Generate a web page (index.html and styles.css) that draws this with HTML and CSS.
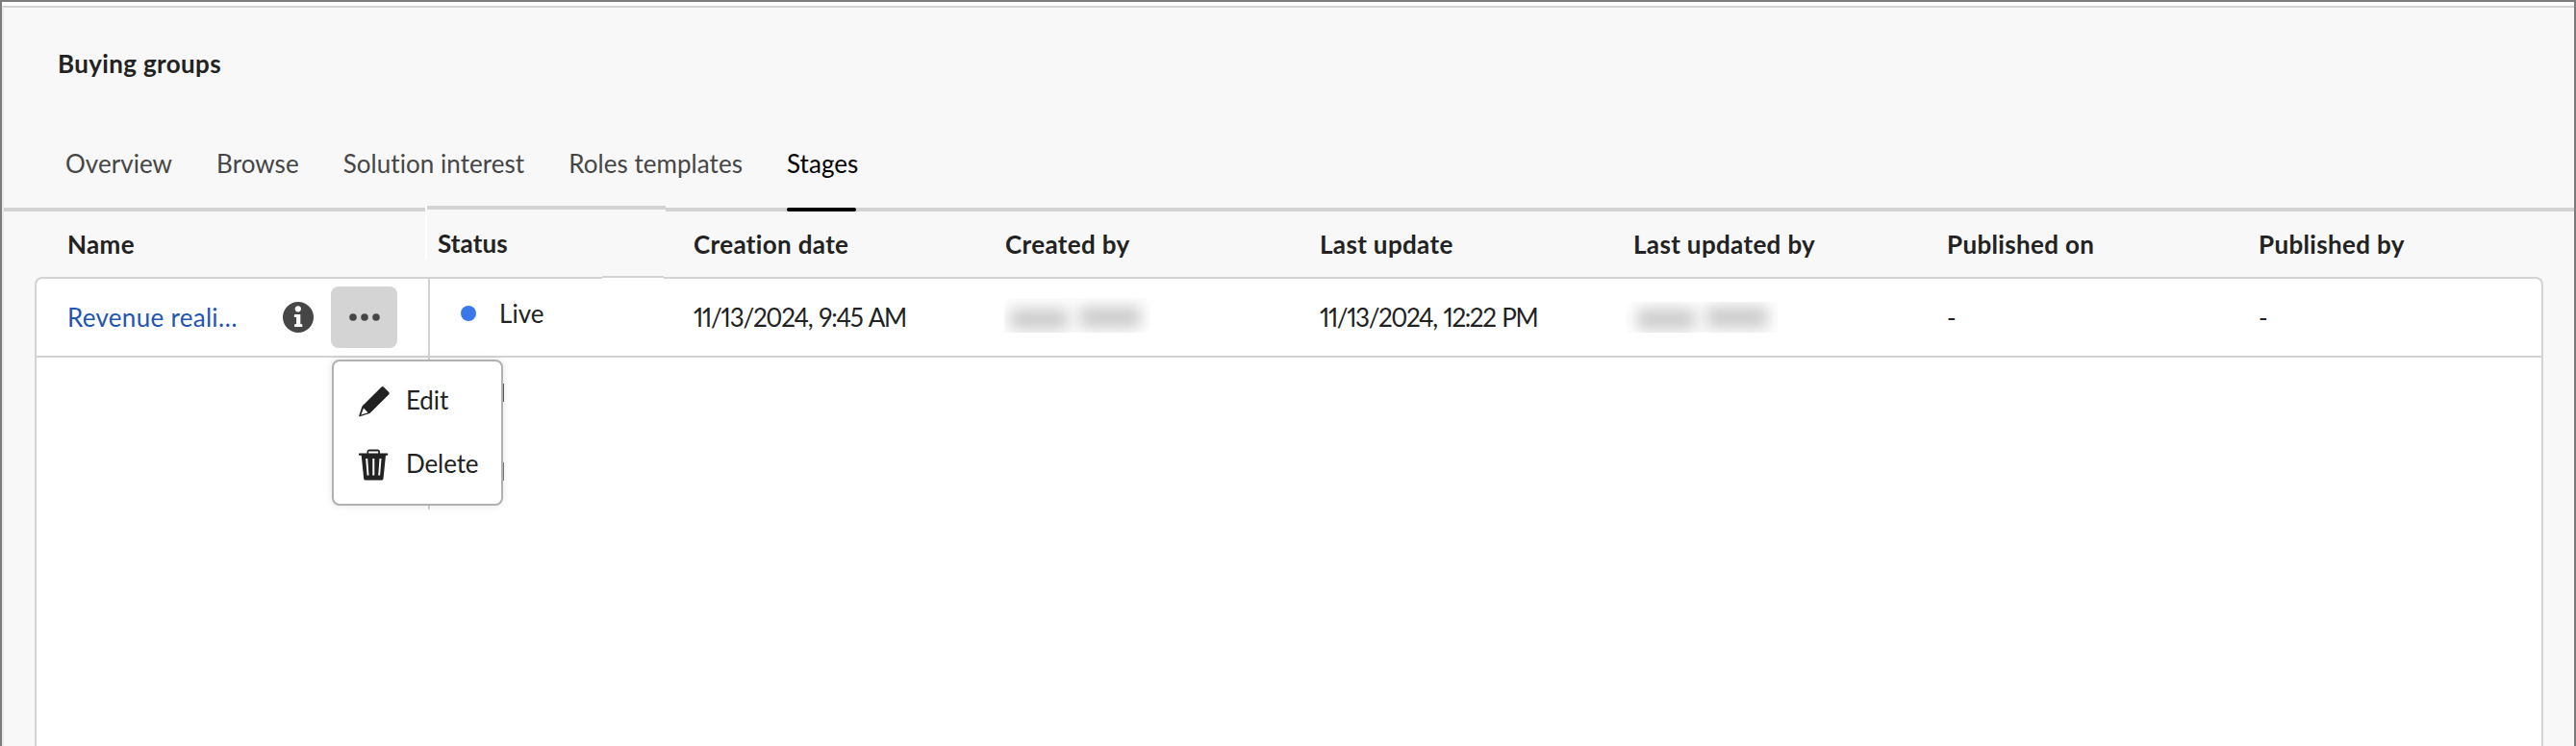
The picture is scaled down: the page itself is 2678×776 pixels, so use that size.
FILE: index.html
```html
<!DOCTYPE html>
<html lang="en">
<head>
<meta charset="utf-8">
<title>Buying groups</title>
<link rel="stylesheet" href="styles.css">
</head>
<body>
<div class="frame">
  <div class="app">
    <h1 class="title">Buying groups</h1>
    <nav class="tabs">
      <a class="tab">Overview</a>
      <a class="tab">Browse</a>
      <a class="tab">Solution interest</a>
      <a class="tab">Roles templates</a>
      <a class="tab active">Stages</a>
    </nav>
    <div class="table">
      <div class="grid head">
        <div class="cell name">Name</div>
        <div class="cell status">Status</div>
        <div class="cell">Creation date</div>
        <div class="cell">Created by</div>
        <div class="cell wide">Last update</div>
        <div class="cell wide">Last updated by</div>
        <div class="cell wide">Published on</div>
        <div class="cell wide">Published by</div>
      </div>
      <div class="body">
        <div class="grid row">
          <div class="cell name">
            <a class="link">Revenue reali…</a>
            <svg class="info" width="32" height="32" viewBox="0 0 32 32"><circle cx="16" cy="16" r="16" fill="#464646"/><circle cx="15.8" cy="7.3" r="3.1" fill="#fff"/><path d="M12.8 13h5.500v10h1a1 1 0 0 1 1 1v2h-8.200v-2a1 1 0 0 1 1-1h1v-7h-1.300a1 1 0 0 1-1-1v-1a1 1 0 0 1 1-1z" fill="#fff"/></svg>
            <button class="more"><svg width="32" height="8" viewBox="0 0 32 8" fill="#464646"><circle cx="4" cy="4" r="3.8"/><circle cx="16" cy="4" r="3.8"/><circle cx="28" cy="4" r="3.8"/></svg></button>
          </div>
          <div class="cell status"><span class="dot"></span>Live</div>
          <div class="cell date">11/13/2024, 9:45 AM</div>
          <div class="cell person"><span class="redacted"><i class="w1"></i><i class="w2"></i></span></div>
          <div class="cell wide date late">11/13/2024, 12:22 PM</div>
          <div class="cell wide person second"><span class="redacted"><i class="w1"></i><i class="w2"></i></span></div>
          <div class="cell wide">-</div>
          <div class="cell wide">-</div>
        </div>
        <div class="divider"></div>
        <div class="menu">
          <div class="item"><svg width="34" height="34" viewBox="0 0 34 34"><path fill="#222" fill-rule="evenodd" d="M23.600 1.600a1.600 1.600 0 0 1 2.200 0l5.500 5.500a1.600 1.600 0 0 1 0 2.200L11.400 28.900 1 32.300a.6.6 0 0 1-.8-.8L3.500 21.500zM5 23.600L2.300 30.600l7.200-2.300z"/></svg>Edit</div>
          <div class="item"><svg width="34" height="34" viewBox="0 0 34 34"><path fill="#222" fill-rule="evenodd" d="M8.500 4.500V3a2.500 2.500 0 0 1 2.500-2.500h8.500A2.500 2.500 0 0 1 22 3v1.500h7.500a.8.8 0 0 1 .8.800v.600a.8.8 0 0 1-.8.800H28L25.500 31a1.800 1.800 0 0 1-1.800 1.500H7A1.800 1.800 0 0 1 5.200 31L2.700 6.700H.7a.8.8 0 0 1-.8-.800v-.600a.8.8 0 0 1 .8-.800zM10.200 4.500h10V2.500h-10zM7.200 10l1.400 17.500h1.900L9.200 10zM14.300 10v17.500h2V10zM21.500 10l-1.300 17.500h1.900L23.500 10z"/></svg>Delete</div>
        </div>
      </div>
    </div>
  </div>
</div>
</body>
</html>
```
FILE: styles.css
```css
* { box-sizing: border-box; }
body {
  margin: 0;
  background: #fff;
  color: #222;
  font: 400 26px/36px Lato, "Open Sans", sans-serif;
  letter-spacing: .05px;
}
.frame {
  height: 776px;
  padding-top: 4px;
  border: 2px solid #7d7b7b;
  border-bottom: 0;
  overflow: hidden;
}
.app {
  display: flex;
  flex-direction: column;
  height: 770px;
  border-top: 2px solid #d3d3d3;
  border-left: 2px solid #e9e9e9;
  background: #f8f8f8;
}
.title {
  margin: 40px 0 0 56px;
  font-size: 26px;
  font-weight: 700;
  letter-spacing: .35px;
}
.tabs {
  display: flex;
  gap: 46px;
  height: 136px;
  padding: 68px 0 0 64px;
  border-bottom: 4px solid #d3d3d3;
}
.tab { position: relative; color: #464646; white-space: nowrap; }
.tab.active { color: #000; }
.tab.active::after {
  content: "";
  position: absolute;
  left: 0;
  top: 64px;
  width: 72px;
  height: 4px;
  border-radius: 2px;
  background: #000;
}
.table {
  display: flex;
  flex: 1;
  flex-direction: column;
  width: 2608px;
  margin-left: 32px;
}
.grid {
  display: grid;
  grid-template-columns: 410px 256px 324px 326px 326px 326px 324px 1fr;
}
.head {
  height: 68px;
  padding-top: 16px;
  font-weight: 700;
  letter-spacing: .35px;
}
.cell { padding-left: 19px; white-space: nowrap; }
.cell.wide { padding-left: 20px; }
.cell.name { padding-left: 34px; }
.head .status { position: relative; z-index: 1; top: -1px; padding-left: 9px; letter-spacing: .1px; }
.head .status::before {
  content: "";
  position: absolute;
  left: -4px;
  top: -21px;
  width: 248px;
  height: 56px;
  z-index: -1;
  border-left: 2px solid #fff;
  background: linear-gradient(#d3d3d3, #d3d3d3) 0 0 / 100% 4px no-repeat, linear-gradient(#f8f8f8, #f8f8f8) 0 4px / 100% 2px no-repeat;
}
.head .status::after {
  content: "";
  position: absolute;
  left: 180px;
  top: 52px;
  width: 64px;
  height: 3px;
  border-top: 2px solid #d3d3d3;
  background: #fff;
}
.body {
  position: relative;
  flex: 1;
  border: 2px solid #d3d3d3;
  border-bottom: 0;
  border-radius: 8px 8px 0 0;
  background: #fff;
}
.row {
  height: 82px;
  border-bottom: 2px solid #d3d3d3;
  grid-template-columns: 408px 256px 324px 326px 326px 326px 324px 1fr;
}
.row .cell { padding-top: 22px; }
.row .name { display: flex; align-items: flex-start; padding-left: 32px; }
.link { width: 224px; color: #1f55b5; letter-spacing: .3px; }
.info { margin-top: 2px; }
.more {
  display: grid;
  place-items: center;
  width: 69px;
  height: 64px;
  margin: -14px 0 0 18px;
  padding: 0;
  border: 0;
  border-radius: 8px;
  background: #d4d4d4;
}
.row .status { display: flex; padding: 18px 0 0 32px; border-left: 2px solid #d3d3d3; margin-left: -1px; }
.dot {
  width: 16px;
  height: 16px;
  margin: 10px 24px 0 0;
  border-radius: 50%;
  background: #3a78e9;
}
.date { font-feature-settings: "pnum"; letter-spacing: -1.25px; word-spacing: 1.5px; }
.date.late { letter-spacing: -1.4px; }
.row .person { padding: 20px 0 0 18px; }
.redacted {
  display: flex;
  gap: 12px;
  width: 152px;
  height: 36px;
  padding: 11px 0 0 6px;
  overflow: hidden;
}
.redacted i { height: 22px; background: #cacaca; filter: blur(8px); }
.redacted .w1 { width: 60px; }
.redacted .w2 { width: 64px; margin-top: -2px; }
.row .person.second { padding-top: 24px; padding-left: 12px; }
.second .redacted { width: 158px; height: 32px; padding: 7px 0 0 12px; }
.divider {
  position: absolute;
  left: 407px;
  top: 82px;
  width: 2px;
  height: 158px;
  background: #d3d3d3;
}
.menu {
  position: absolute;
  left: 307px;
  top: 84px;
  width: 178px;
  height: 152px;
  padding: 22px 0 0 26px;
  border: 2px solid #b1b1b1;
  border-radius: 8px;
  background: #fff;
  box-shadow: 0 0 8px rgba(0, 0, 0, .1);
}
/* Edges of the text covered by the open menu */
.menu::before, .menu::after {
  content: "";
  position: absolute;
  left: 176px;
  top: 23px;
  width: 1px;
  height: 19px;
  background: #555;
}
.menu::after { top: 105px; background: #777; }
.item { display: flex; gap: 15px; height: 66px; letter-spacing: -.1px; }
.item svg { margin-top: 3px; }
```
